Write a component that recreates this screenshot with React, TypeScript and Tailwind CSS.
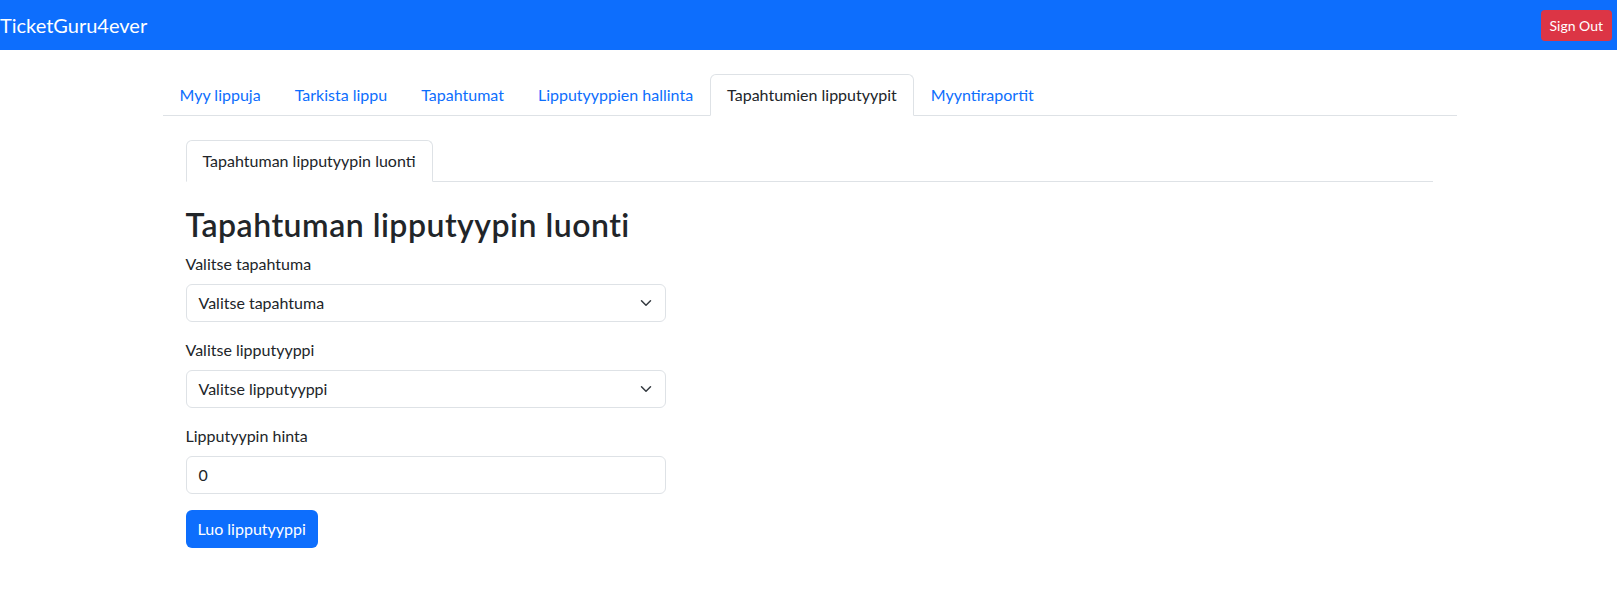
import React from "react";

function Chevron() {
  return (
    <svg width="16" height="12" viewBox="0 0 16 16" className="pointer-events-none absolute right-3 top-1/2 -translate-y-1/2">
      <path fill="none" stroke="#343a40" strokeLinecap="round" strokeLinejoin="round" strokeWidth="2" d="m2 5 6 6 6-6" />
    </svg>
  );
}

export default function App() {
  const tabs = ["Myy lippuja", "Tarkista lippu", "Tapahtumat", "Lipputyyppien hallinta", "Tapahtumien lipputyypit", "Myyntiraportit"];
  const active = 4;
  return (
    <div className="min-h-screen bg-white text-[#212529] text-base leading-6" style={{ fontFamily: "Lato, 'Noto Sans', sans-serif" }}>
      <nav className="flex h-[50px] items-center justify-between bg-[#0d6efd]">
        <span className="text-[20px] leading-[30px] text-white">TicketGuru4ever</span>
        <button className="mr-[5px] h-[31px] rounded-[4px] bg-[#dc3545] px-[9px] text-sm leading-[21px] text-white">Sign Out</button>
      </nav>
      <div className="mx-auto max-w-[1320px] px-3">
        <ul className="ml-[2px] mt-6 flex border-b border-[#dee2e6]">
          {tabs.map((t, i) => (
            <li key={t} className="-mb-px">
              <a
                className={
                  i === active
                    ? "block rounded-t-[6px] border border-[#dee2e6] border-b-white bg-white px-4 py-2 text-[#212529]"
                    : "block rounded-t-[6px] border border-transparent px-4 py-2 text-[#0d6efd]"
                }
              >
                {t}
              </a>
            </li>
          ))}
        </ul>
        <div className="pl-[25px] pr-6">
          <ul className="mt-6 flex border-b border-[#dee2e6]">
            <li className="-mb-px">
              <a className="block rounded-t-[6px] border border-[#dee2e6] border-b-white bg-white px-4 py-2 text-[#212529]">
                Tapahtuman lipputyypin luonti
              </a>
            </li>
          </ul>
          <div className="w-[480px] pt-6">
            <h2 className="mb-2 text-[32px] font-semibold leading-[38px] tracking-[0.5px]">Tapahtuman lipputyypin luonti</h2>
            <div className="mb-4">
              <label className="mb-2 block">Valitse tapahtuma</label>
              <div className="relative">
                <div className="h-[38px] rounded-[6px] border border-[#dee2e6] py-[6px] pl-3 pr-9">Valitse tapahtuma</div>
                <Chevron />
              </div>
            </div>
            <div className="mb-4">
              <label className="mb-2 block">Valitse lipputyyppi</label>
              <div className="relative">
                <div className="h-[38px] rounded-[6px] border border-[#dee2e6] py-[6px] pl-3 pr-9">Valitse lipputyyppi</div>
                <Chevron />
              </div>
            </div>
            <div className="mb-4">
              <label className="mb-2 block">Lipputyypin hinta</label>
              <div className="h-[38px] rounded-[6px] border border-[#dee2e6] px-3 py-[6px]">0</div>
            </div>
            <button className="h-[38px] rounded-[6px] bg-[#0d6efd] px-3 text-white">Luo lipputyyppi</button>
          </div>
        </div>
      </div>
    </div>
  );
}
